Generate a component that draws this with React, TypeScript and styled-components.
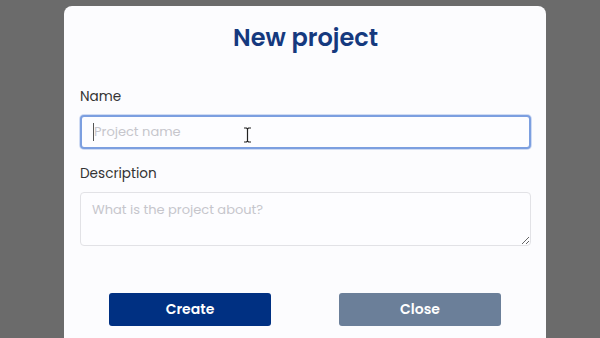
import React, { useState } from 'react';
import styled, { createGlobalStyle } from 'styled-components';

const GlobalStyle = createGlobalStyle`
  html, body {
    margin: 0;
    padding: 0;
    background: #6b6b6b;
    overflow: hidden;
  }
  body {
    font-family: Poppins, 'Open Sans', 'Noto Sans', sans-serif;
  }
`;

const NewProjectModal: React.FC = () => {
  const [name, setName] = useState('');
  const [description, setDescription] = useState('');

  return (
    <Backdrop>
      <GlobalStyle />
      <Modal>
        <Title>New project</Title>
        <Form onSubmit={(e) => e.preventDefault()}>
          <Label htmlFor="name">Name</Label>
          <FieldWrap>
            <Input
              id="name"
              type="text"
              placeholder="Project name"
              value={name}
              $focused
              onChange={(e) => setName(e.target.value)}
            />
            {!name && <Caret />}
            <MouseCursor width="9" height="16" viewBox="0 0 9 16">
              <path d="M1 1h2.5l1 1 1-1H8M4.5 2v12M1 15h2.5l1-1 1 1H8" stroke="#222" strokeWidth="1.2" fill="none" />
            </MouseCursor>
          </FieldWrap>

          <Label htmlFor="description" $spaced>
            Description
          </Label>
          <TextArea
            id="description"
            placeholder="What is the project about?"
            value={description}
            onChange={(e) => setDescription(e.target.value)}
          />

          <ButtonRow>
            <Button type="submit" $variant="primary">
              Create
            </Button>
            <Button type="button" $variant="muted">
              Close
            </Button>
          </ButtonRow>
        </Form>
      </Modal>
    </Backdrop>
  );
};

export default NewProjectModal;

const Backdrop = styled.div`
  width: 600px;
  height: 338px;
  display: flex;
  justify-content: center;
  padding-top: 6px;
  padding-left: 10px;
  box-sizing: border-box;
  background: #6b6b6b;
  overflow: hidden;
`;

const Modal = styled.div`
  width: 482px;
  height: 360px;
  background: #fcfcfe;
  border-radius: 8px;
  padding: 14px 15px 0 16px;
  box-sizing: border-box;
  display: flex;
  flex-direction: column;
`;

const Title = styled.h2`
  margin: 0;
  text-align: center;
  font-size: 24px;
  line-height: 36px;
  font-weight: 600;
  color: #15397e;
`;

const Form = styled.form`
  display: flex;
  flex-direction: column;
  margin-top: 31px;
`;

const Label = styled.label<{ $spaced?: boolean }>`
  font-size: 13.6px;
  line-height: 20px;
  color: #333;
  margin-top: ${({ $spaced }) => ($spaced ? '15px' : '0')};
  margin-bottom: 8px;
`;

const FieldWrap = styled.div`
  position: relative;
`;

const Input = styled.input<{ $focused?: boolean }>`
  width: 100%;
  height: 34px;
  box-sizing: border-box;
  padding: 0 12px;
  font-family: inherit;
  font-size: 13px;
  color: #333;
  background: #fdfdff;
  border: 2px solid ${({ $focused }) => ($focused ? '#7c9fe0' : '#e2e2e6')};
  border-radius: 4px;
  box-shadow: ${({ $focused }) => ($focused ? '0 0 0 1px rgba(124, 159, 224, 0.35)' : 'none')};
  outline: none;

  &::placeholder {
    color: #c6c6cc;
  }
`;

const Caret = styled.span`
  position: absolute;
  left: 13px;
  top: 8px;
  width: 1px;
  height: 18px;
  background: #555;
`;

const MouseCursor = styled.svg`
  position: absolute;
  left: 163px;
  top: 12px;
`;

const TextArea = styled.textarea`
  width: 100%;
  height: 54px;
  box-sizing: border-box;
  padding: 7px 11px;
  font-family: inherit;
  font-size: 13px;
  color: #333;
  background: #fdfdff;
  border: 1px solid #e2e2e6;
  border-radius: 4px;
  outline: none;
  resize: vertical;

  &::placeholder {
    color: #c6c6cc;
  }
`;

const ButtonRow = styled.div`
  display: flex;
  justify-content: space-between;
  padding: 0 30px 0 29px;
  margin-top: 47px;
`;

const Button = styled.button<{ $variant: 'primary' | 'muted' }>`
  width: 162px;
  height: 33px;
  border: none;
  border-radius: 3px;
  font-family: inherit;
  font-size: 14px;
  font-weight: 600;
  color: #fff;
  cursor: pointer;
  background: ${({ $variant }) => ($variant === 'primary' ? '#003082' : '#6b7f99')};
`;
